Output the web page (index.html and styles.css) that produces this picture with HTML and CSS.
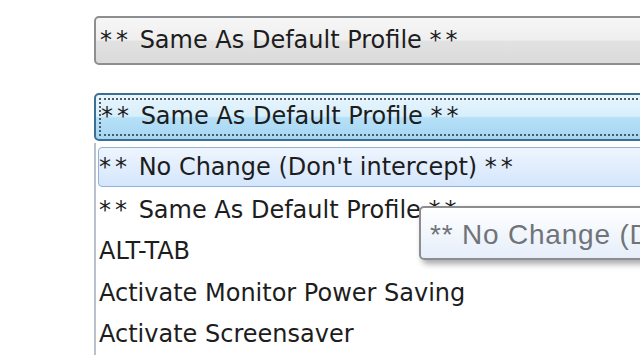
FILE: index.html
```html
<!DOCTYPE html>
<html lang="en">
<head>
    <meta charset="UTF-8">
    <title>Profile hotkey</title>
    <link rel="stylesheet" href="styles.css">
</head>
<body>
    <div class="panel">
        <div class="combo">
            <span class="text"><span class="st">**</span> Same As Default Profile <span class="st">**</span></span>
        </div>
        <div class="combo open">
            <div class="focus">
                <span class="text"><span class="st">**</span> Same As Default Profile <span class="st">**</span></span>
            </div>
        </div>
        <div class="list">
            <div class="item hot"><span><span class="st">**</span> No Change (Don't intercept) <span class="st">**</span></span></div>
            <div class="item"><span><span class="st">**</span> Same As Default Profile <span class="st">**</span></span></div>
            <div class="item"><span>ALT-TAB</span></div>
            <div class="item"><span>Activate Monitor Power Saving</span></div>
            <div class="item"><span>Activate Screensaver</span></div>
            <div class="tip">** No Change (Don't intercept) **</div>
        </div>
    </div>
</body>
</html>
```

FILE: styles.css
```css
*{
    margin: 0;
    padding: 0;
    box-sizing: border-box;
}
body{
    width: 640px;
    height: 360px;
    overflow: hidden;
    background: #fff;
    font-family: 'DejaVu Sans', sans-serif;
    color: #1d1d1d;
}
.panel{
    padding: 16px 0 0 94px;
    width: 760px;
}
.st{
    letter-spacing: 4px;
}
.combo{
    height: 49px;
    border: 2px solid #8c8e90;
    border-radius: 5px;
    background: linear-gradient(#f6f6f6 0%, #efefef 48%, #e2e2e2 52%, #dadada 100%);
    display: flex;
    align-items: center;
    padding-left: 4px;
    font-size: 24px;
}
.combo.open{
    margin-top: 28px;
    height: 48px;
    border-color: #3d6f95;
    background: linear-gradient(#e8f5fd 0%, #d7effc 48%, #b6e0f7 52%, #a4d6f3 100%);
    padding: 3px 0 3px 3px;
}
.combo .focus{
    flex: 1;
    height: 100%;
    border: 2px dotted #4f5a63;
    display: flex;
    align-items: center;
    padding-left: 0;
}
.combo .text{
    margin-top: -2px;
}
.list{
    position: relative;
    margin-top: 2px;
    border-left: 2px solid #b9c2cc;
    padding: 4px 0 0 2px;
    font-size: 24px;
}
.item{
    height: 41.5px;
    display: flex;
    align-items: center;
    padding-left: 1px;
    white-space: nowrap;
}
.item.hot{
    height: 40px;
    margin-bottom: 2px;
    padding-left: 0;
    border: 1px solid #8fb2da;
    border-radius: 4px;
    background: linear-gradient(#eef5fe, #d4e6fc);
}
.tip{
    position: absolute;
    left: 323px;
    top: 63px;
    width: 300px;
    height: 54px;
    border: 2px solid #8b8d90;
    border-radius: 5px;
    background: linear-gradient(#ffffff, #e6eefa);
    box-shadow: 3px 4px 6px rgba(0,0,0,.35);
    font-family: 'Liberation Sans', sans-serif;
    font-size: 28px;
    letter-spacing: 0.8px;
    color: #707478;
    padding: 11px 0 0 9px;
    white-space: nowrap;
}
```
